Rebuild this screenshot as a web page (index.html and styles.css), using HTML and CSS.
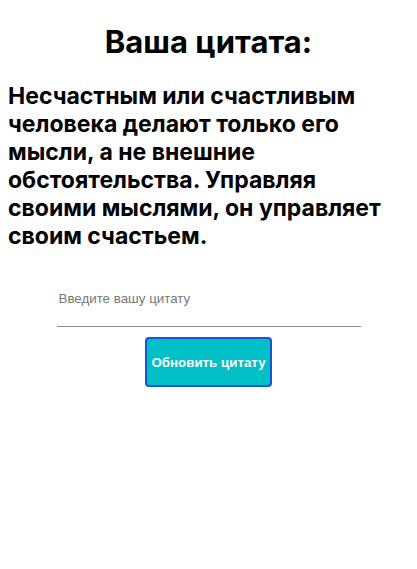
FILE: index.html
```html
<!DOCTYPE html>
<html lang="ru">
<head>
<meta charset="utf-8">
<title>Цитата</title>
<link rel="stylesheet" href="styles.css">
</head>
<body>
<div class="app">
  <h1 class="title">Ваша цитата:</h1>
  <p class="quote">Несчастным или счастливым человека делают только его мысли, а не внешние обстоятельства. Управляя своими мыслями, он управляет своим счастьем.</p>
  <form class="form">
    <input class="field" type="text" placeholder="Введите вашу цитату">
    <button class="btn" type="button">Обновить цитату</button>
  </form>
</div>
</body>
</html>
```
FILE: styles.css
```css
body {
  margin: 8px;
  font-family: Inter, "Noto Sans", sans-serif;
  color: #000;
  background: #fff;
}
.title {
  font-size: 31px;
  font-weight: 700;
  text-align: center;
  margin: 16px 0 0;
  line-height: 36px;
}
.quote {
  font-size: 23px;
  font-weight: 700;
  line-height: 28px;
  margin: 22px 0 0;
}
.form {
  display: flex;
  flex-direction: column;
  align-items: center;
  margin-top: 41px;
}
.field {
  width: 304px;
  box-sizing: border-box;
  border: none;
  border-bottom: 1px solid #8a8a8a;
  padding: 0 2px 20px;
  font-family: "Liberation Sans", Arial, sans-serif;
  font-size: 13.33px;
  outline: none;
}
.field::placeholder { color: #777; }
.btn {
  margin-top: 10px;
  width: 127px;
  height: 50px;
  padding: 0;
  white-space: nowrap;
  background: #00bfc7;
  border: 2px solid #1456d4;
  border-radius: 4px;
  color: #fff;
  font-family: "Liberation Sans", Arial, sans-serif;
  font-weight: 700;
  font-size: 13.33px;
}
```
